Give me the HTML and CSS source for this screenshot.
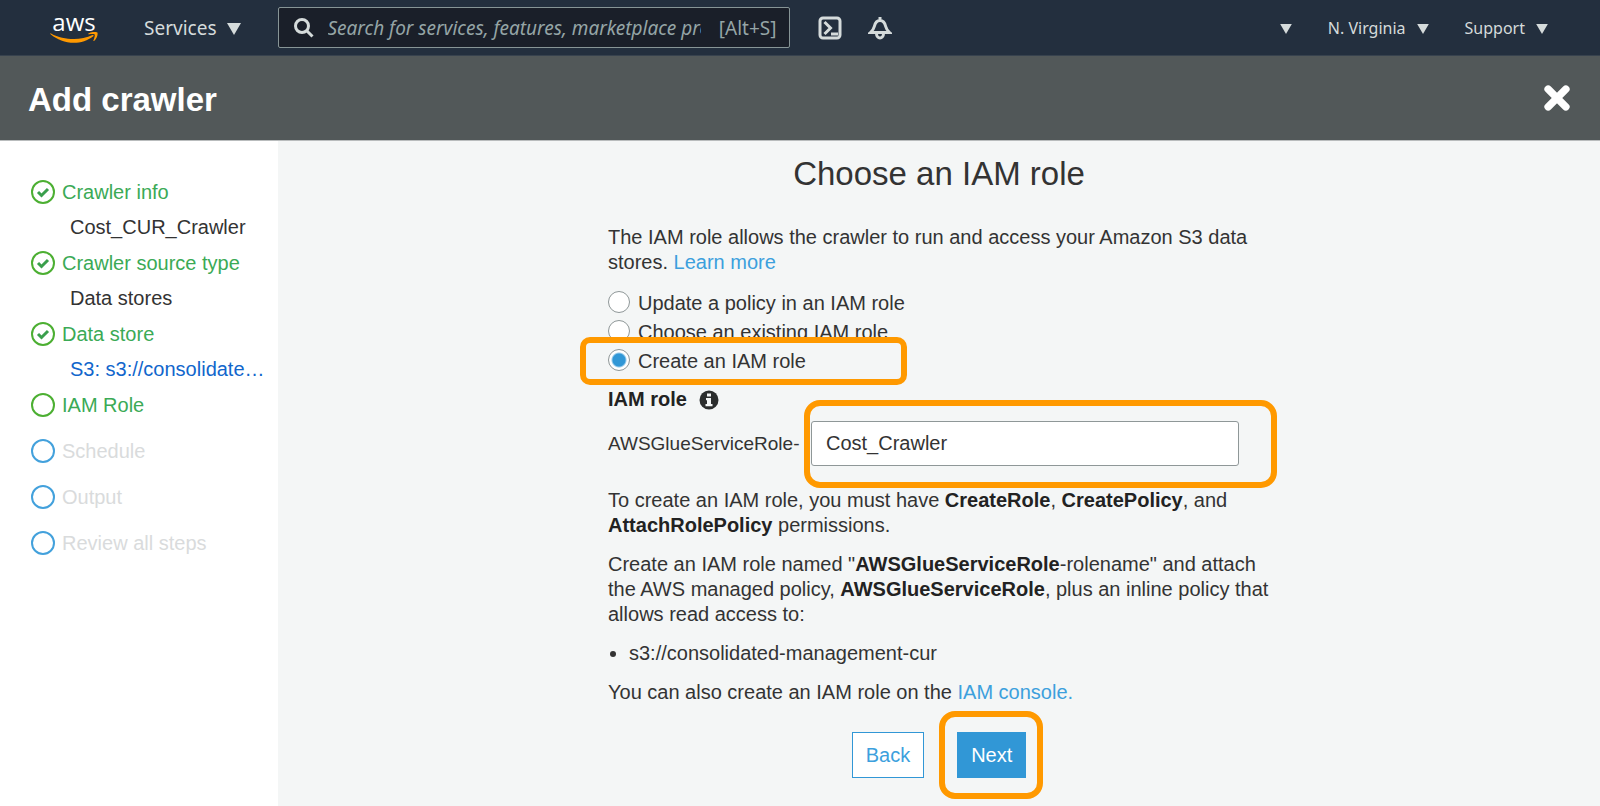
FILE: index.html
```html
<!DOCTYPE html>
<html lang="en">
<head>
<meta charset="utf-8">
<meta name="viewport" content="width=device-width, initial-scale=1">
<title>Add crawler</title>
<link rel="stylesheet" href="styles.css">
</head>
<body>
<nav class="topnav">
  <a class="logo" href="#">
    <span class="logo-text">aws</span>
    <svg class="logo-smile" viewBox="0 0 48 12" aria-hidden="true">
      <path d="M1 1.500C8 5.500 16 7 24 7c6 0 13-1.500 18.500-4 .9-.4 1.600.6.8 1.200C38 8.500 30.500 10.800 24 10.800 15 10.800 7 7.600.6 2.200 0 1.700.4 1.100 1 1.500z"/>
      <path d="M44.600 2.500c-.7-.9-4.400-.4-6-.2-.5.100-.6-.4-.1-.9 3-2 8.300-1.700 8.900-.8.600.9-.1 5.900-3.300 8.300-.5.400-.9.200-.7-.3.600-1.600 1.900-5.300 1.200-6.100z"/>
    </svg>
  </a>
  <button class="nav-btn nav-services" type="button">Services <svg class="caret" viewBox="0 0 14 12" aria-hidden="true"><path d="M0 0h14L7 12z"/></svg></button>
  <div class="search">
    <svg class="search-icon" viewBox="0 0 20 20" aria-hidden="true"><circle cx="8" cy="8" r="6.500"/><path d="M12.500 12.500L18.500 18.500"/></svg>
    <input class="search-input" type="text" aria-label="Search" placeholder="Search for services, features, marketplace products, and docs">
    <span class="search-hint">[Alt+S]</span>
  </div>
  <button class="icon-btn" type="button" aria-label="CloudShell">
    <svg class="nav-icon" viewBox="0 0 24 24" aria-hidden="true"><rect x="2" y="2" width="20" height="20" rx="3"/><path d="M6.500 6l6 6-6 6M13 18h7"/></svg>
  </button>
  <button class="icon-btn" type="button" aria-label="Notifications">
    <svg class="nav-icon" viewBox="0 0 24 24" aria-hidden="true"><path d="M12 1v3M2.500 16.500h19c-2-1.800-3.200-3.500-3.800-6C16.800 6.500 15 4.500 12 4.500S7.200 6.500 6.300 10.500c-.6 2.500-1.800 4.200-3.800 6zM8.500 17.500c0 6 7 6 7 0"/></svg>
  </button>
  <div class="nav-right">
    <button class="nav-btn" type="button" aria-label="Account"><svg class="caret" viewBox="0 0 14 12" aria-hidden="true"><path d="M0 0h14L7 12z"/></svg></button>
    <button class="nav-btn" type="button">N. Virginia <svg class="caret" viewBox="0 0 14 12" aria-hidden="true"><path d="M0 0h14L7 12z"/></svg></button>
    <button class="nav-btn" type="button">Support <svg class="caret" viewBox="0 0 14 12" aria-hidden="true"><path d="M0 0h14L7 12z"/></svg></button>
  </div>
</nav>
<header class="titlebar">
  <h1 class="title">Add crawler</h1>
  <button class="close" type="button" aria-label="Close"><svg viewBox="0 0 26 26" aria-hidden="true"><path d="M4.800 4.800l16.400 16.400M21.200 4.800L4.800 21.200"/></svg></button>
</header>
<div class="body">
  <aside class="sidebar">
    <ol class="steps">
      <li class="step done">
        <div class="step-name"><span class="ring"><svg viewBox="0 0 14 12" aria-hidden="true"><path d="M2 6l3.500 3.500L12 3"/></svg></span>Crawler info</div>
        <div class="step-value">Cost_CUR_Crawler</div>
      </li>
      <li class="step done">
        <div class="step-name"><span class="ring"><svg viewBox="0 0 14 12" aria-hidden="true"><path d="M2 6l3.500 3.500L12 3"/></svg></span>Crawler source type</div>
        <div class="step-value">Data stores</div>
      </li>
      <li class="step done">
        <div class="step-name"><span class="ring"><svg viewBox="0 0 14 12" aria-hidden="true"><path d="M2 6l3.500 3.500L12 3"/></svg></span>Data store</div>
        <a class="step-value step-link" href="#">S3: s3://consolidated-management-cur</a>
      </li>
      <li class="step done bare"><div class="step-name"><span class="ring"></span>IAM Role</div></li>
      <li class="step bare"><div class="step-name"><span class="ring"></span>Schedule</div></li>
      <li class="step bare"><div class="step-name"><span class="ring"></span>Output</div></li>
      <li class="step bare"><div class="step-name"><span class="ring"></span>Review all steps</div></li>
    </ol>
  </aside>
  <main class="main">
    <h2 class="heading">Choose an IAM role</h2>
    <form class="form">
      <p class="text">The IAM role allows the crawler to run and access your Amazon S3 data stores. <a class="link" href="#">Learn more</a></p>
      <div class="options">
        <label class="option"><input class="radio" type="radio" name="mode">Update a policy in an IAM role</label>
        <label class="option"><input class="radio" type="radio" name="mode">Choose an existing IAM role</label>
        <label class="option marked"><input class="radio" type="radio" name="mode" checked>Create an IAM role<span class="mark mark-option"></span></label>
      </div>
      <div class="field-title"><label for="role">IAM role</label>
        <svg class="info" viewBox="0 0 20 20" aria-hidden="true"><circle cx="10" cy="10" r="9.500"/><path d="M8 3.500h4v3H8zM7 8h5v6h1.500v2.200h-7V14H8v-3.800H7z"/></svg>
      </div>
      <div class="field">
        <span class="prefix">AWSGlueServiceRole-</span>
        <div class="field-box marked"><input class="role-input" id="role" type="text" value="Cost_Crawler"><span class="mark mark-field"></span></div>
      </div>
      <p class="text">To create an IAM role, you must have <b>CreateRole</b>, <b>CreatePolicy</b>, and <b>AttachRolePolicy</b> permissions.</p>
      <p class="text">Create an IAM role named "<b>AWSGlueServiceRole</b>-rolename" and attach the AWS managed policy, <b>AWSGlueServiceRole</b>, plus an inline policy that allows read access to:</p>
      <ul class="paths"><li>s3://consolidated-management-cur</li></ul>
      <p class="text">You can also create an IAM role on the <a class="link" href="#">IAM console.</a></p>
      <div class="actions">
        <button class="btn" type="button">Back</button>
        <div class="marked"><button class="btn btn-primary" type="button">Next</button><span class="mark mark-next"></span></div>
      </div>
    </form>
  </main>
</div>
</body>
</html>
```

FILE: styles.css
```css
* { box-sizing: border-box; }

body {
  margin: 0;
  min-height: 100vh;
  display: flex;
  flex-direction: column;
  font: 20px/25px "Liberation Sans", Arial, sans-serif;
  color: #333;
  background: #f4f6f6;
}

button, input { font: inherit; color: inherit; margin: 0; }
button { cursor: pointer; }
a { text-decoration: none; }
h1, h2, p, ul, ol { margin: 0; padding: 0; }

/* Top navigation */
.topnav {
  display: flex;
  align-items: center;
  padding: 7px 52px 7px 50px;
  border-bottom: 1px solid #37424e;
  background: #232f3e;
  color: #d5dbdb;
  font-family: "Noto Sans", "Open Sans", sans-serif;
}

.logo {
  display: flex;
  flex-direction: column;
  align-items: center;
  width: 48px;
  margin-right: 46px;
  color: #fff;
}

.logo-text { font: 500 24px/20px "Open Sans", sans-serif; }
.logo-smile { width: 48px; height: 12px; fill: #ff9900; }

.nav-btn {
  display: flex;
  align-items: center;
  gap: 11px;
  padding: 2px 0 0;
  border: 0;
  background: none;
  font-size: 16px;
}

.nav-services { font-size: 19px; gap: 10px; }
.caret { width: 12px; height: 10px; fill: #d5dbdb; }
.nav-services .caret { width: 14px; height: 12px; }

.search {
  display: flex;
  align-items: center;
  width: 512px;
  margin: 0 28px 0 37px;
  padding: 6px 12px 6px 15px;
  border: 1px solid #879596;
  border-radius: 2px;
  background: #1a1f29;
  color: #95a5a6;
  font-size: 19px;
  line-height: 26px;
}

.search-icon {
  flex: none;
  width: 20px;
  height: 20px;
  margin-right: 14px;
  fill: none;
  stroke: #d5dbdb;
  stroke-width: 3;
}

.search-input {
  flex: 1;
  min-width: 0;
  height: 27px;
  margin-right: 18px;
  padding: 0;
  border: 0;
  background: none;
}

.search-input::placeholder { color: #95a5a6; font-style: italic; opacity: 1; }

.icon-btn {
  display: flex;
  margin-right: 26px;
  padding: 0;
  border: 0;
  background: none;
}

.nav-icon {
  width: 24px;
  height: 24px;
  fill: none;
  stroke: #d5dbdb;
  stroke-width: 3;
}

.nav-right {
  display: flex;
  gap: 36px;
  margin-left: auto;
}

/* Title bar */
.titlebar {
  display: flex;
  align-items: center;
  justify-content: space-between;
  padding: 24px 29px 20px 28px;
  border-bottom: 1px solid #b9bcbd;
  background: #525859;
  color: #fff;
}

.title { font-size: 33px; line-height: 40px; }

.close { display: flex; padding: 0 0 5px; border: 0; background: none; }
.close svg { width: 28px; height: 28px; fill: none; stroke: #fff; stroke-width: 7; stroke-linecap: round; }

/* Wizard steps */
.body { flex: 1; display: flex; }

.sidebar {
  flex: none;
  width: 278px;
  padding: 33px 10px 0 31px;
  background: #fff;
}

.steps { list-style: none; }
.bare { margin-bottom: 10px; }

.step-name {
  display: flex;
  align-items: center;
  gap: 7px;
  line-height: 36px;
  color: #d9dbdc;
}

.done .step-name { color: #3baa56; }

.ring {
  display: flex;
  align-items: center;
  justify-content: center;
  width: 24px;
  height: 24px;
  border: 2px solid #43a1dc;
  border-radius: 50%;
}

.done .ring { border-color: #4caf32; }
.ring svg { width: 14px; height: 12px; fill: none; stroke: #3a9f4c; stroke-width: 3; }

.step-value {
  display: block;
  padding-left: 39px;
  line-height: 35px;
  overflow: hidden;
  text-overflow: ellipsis;
  white-space: nowrap;
}

.step-link { color: #1166cc; }

/* Form */
.main {
  flex: 1;
  display: flex;
  flex-direction: column;
  align-items: center;
  padding: 13px 24px 28px;
}

.heading { font-size: 33px; line-height: 40px; font-weight: 400; }
.form { width: 100%; max-width: 662px; margin-top: 31px; }
.text, .paths { margin-bottom: 14px; }
.text b { color: #222; }
.link { color: #3ca0dd; }

.option { display: flex; align-items: center; gap: 8px; width: fit-content; line-height: 29px; }

.radio {
  appearance: none;
  width: 22px;
  height: 22px;
  margin-bottom: 3px;
  border: 1px solid #8f9798;
  border-radius: 50%;
  background: #fff;
}

.radio:checked { background: radial-gradient(circle, #3197d6 6px, #fff 8px); }

/* Orange callout frames */
.marked { position: relative; }

.mark {
  position: absolute;
  border: 6px solid #ff9900;
  border-radius: 16px;
  pointer-events: none;
}

.mark-option { inset: -10px auto -9px -28px; width: 327px; border-radius: 10px; }
.mark-field { inset: -21px -38px -22px -7px; }
.mark-next { inset: -21px -17px -21px -18px; }

.field-title {
  display: flex;
  align-items: center;
  gap: 12px;
  margin: 11px 0 9px;
  font-weight: 700;
  color: #222;
}

.info { width: 20px; height: 20px; fill: #2b2d2d; }
.info path { fill: #f4f6f6; }

.field { display: flex; align-items: center; margin: 0 31px 22px 0; }
.prefix { width: 203px; font-size: 19px; white-space: nowrap; }
.field-box { flex: 1; display: flex; }

.role-input {
  width: 100%;
  padding: 9px 14px;
  border: 1px solid #8f9798;
  border-radius: 3px;
  background: #fff;
  line-height: 25px;
}

.paths { padding-left: 21px; }

.actions { display: flex; justify-content: center; gap: 33px; margin-top: 27px; }

.btn {
  display: block;
  padding: 10px 13px;
  border: 1px solid #3197d6;
  background: #fff;
  color: #3ca0dd;
  line-height: 24px;
}

.btn-primary { background: #3197d6; color: #fff; }
```
